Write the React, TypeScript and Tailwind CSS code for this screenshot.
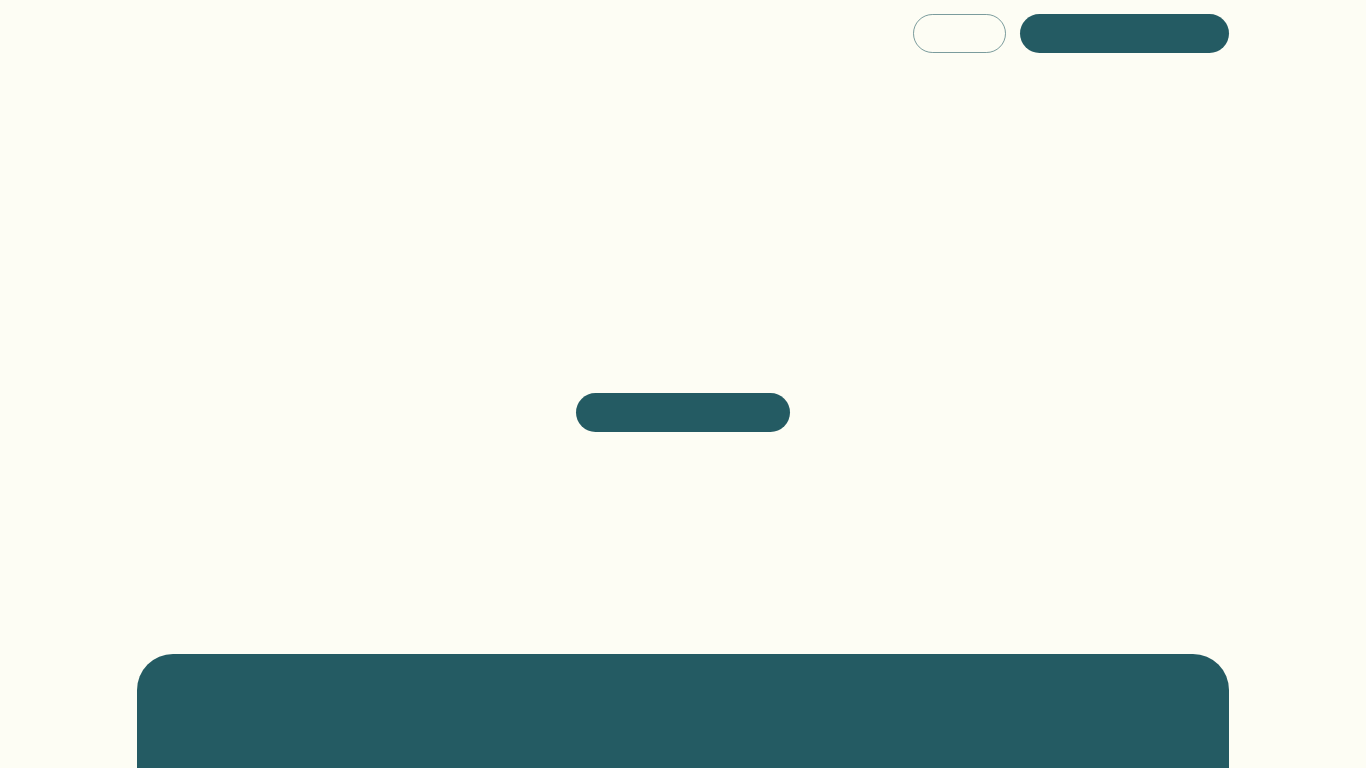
import React from "react";

export default function App() {
  return (
    <div className="min-h-screen bg-[#fdfdf4] font-['Inter',sans-serif]">
      <div className="mx-auto w-[1092px]">
        <header className="flex justify-end gap-[14px] pt-[14px]">
          <button className="h-[39px] w-[93px] rounded-full border border-[#245b63]/60 bg-transparent" aria-label="Log in"></button>
          <button className="h-[39px] w-[209px] rounded-full bg-[#245b63]" aria-label="Get started"></button>
        </header>
        <section className="flex flex-col items-center pt-[340px]">
          <button className="h-[39px] w-[214px] rounded-full bg-[#245b63]" aria-label="Start"></button>
        </section>
        <section className="mt-[222px] h-[400px] rounded-[36px] bg-[#245b63]"></section>
      </div>
    </div>
  );
}
